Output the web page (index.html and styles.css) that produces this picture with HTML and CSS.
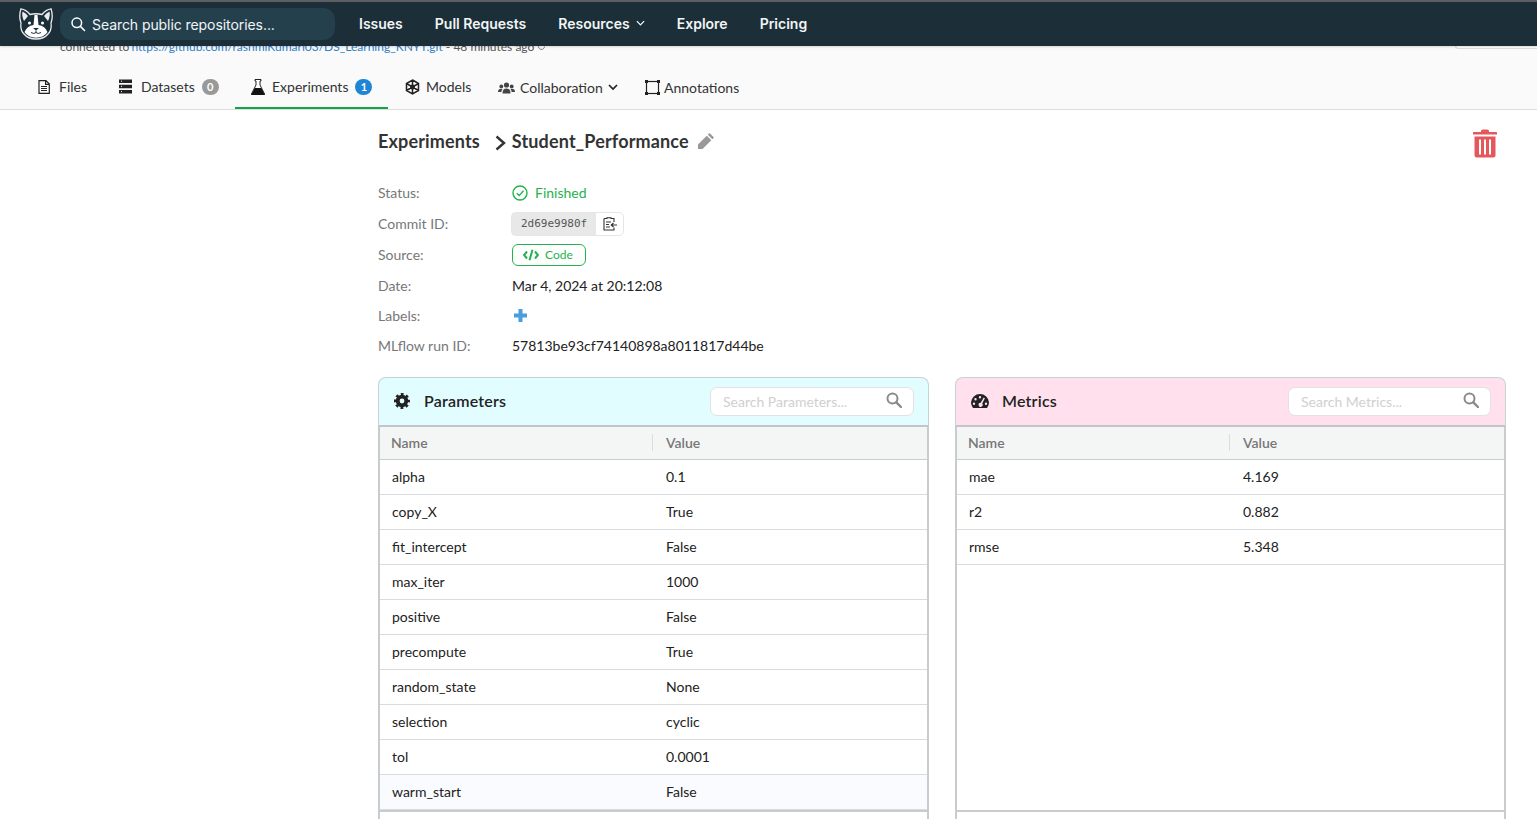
FILE: index.html
```html
<!DOCTYPE html>
<html lang="en">

<head>
  <meta charset="UTF-8">
  <meta name="viewport" content="width=device-width, initial-scale=1.0">
  <title>Student_Performance</title>
  <link rel="stylesheet" href="styles.css">
</head>

<body>
  <header class="navbar">
    <svg class="logo" viewBox="0 0 36 32" width="36" height="32">
      <path d="M3 .8 Q8 1.500 12 6.500 Q18 5 24 6.500 Q28 1.500 33 .8 Q35.500 8 33 15 Q34 22 30 26 Q26 31 18 31 Q10 31 6 26 Q2 22 3 15 Q.5 8 3 .8Z" fill="#1c2f38" stroke="#e8ecee" stroke-width="1.300"/>
      <path d="M4.500 3.500 Q8 5 10 8 L6 13 Q3.500 8 4.500 3.500Z M31.500 3.500 Q28 5 26 8 L30 13 Q32.500 8 31.500 3.500Z" fill="#e8ecee"/>
      <path d="M16.500 7 H19.500 L20.500 17 Q27 18 29.500 24 Q26 29.500 18 29.800 Q10 29.500 6.500 24 Q9 18 15.500 17Z" fill="#fff"/>
      <circle cx="11.500" cy="15" r="1.500" fill="#fff"/>
      <circle cx="24.500" cy="15" r="1.500" fill="#fff"/>
      <path d="M15 20 H21 L18 22.500Z" fill="#1c2f38"/>
      <path d="M18 22.500 V24.500 M13 24.500 Q16 26.500 18 24.500 Q20 26.500 23 24.500" fill="none" stroke="#1c2f38" stroke-width="1"/>
    </svg>
    <div class="nav-search">
      <svg viewBox="0 0 16 16" width="16" height="16"><circle cx="6.800" cy="6.800" r="4.800" fill="none" stroke="#fff" stroke-width="1.500"/><path d="M10.400 10.400 L14.500 14.500" stroke="#fff" stroke-width="1.600" stroke-linecap="round"/></svg>
      <span>Search public repositories...</span>
    </div>
    <nav class="nav-links">
      <a>Issues</a>
      <a>Pull Requests</a>
      <a>Resources <svg viewBox="0 0 10 6" width="9" height="6"><path d="M1 1 L5 5 L9 1" fill="none" stroke="#fff" stroke-width="1.300"/></svg></a>
      <a>Explore</a>
      <a>Pricing</a>
    </nav>
  </header>

  <div class="repo-head">
    <p class="repo-line">connected to <a>https://github.com/rashmiKumari03/DS_Learning_KNYT.git</a> - 48 minutes ago
      <svg viewBox="0 0 12 12" width="9" height="9"><path d="M10 6 A4 4 0 1 1 8.500 2.800 M8.500 .8 V3.200 H6" fill="none" stroke="#777" stroke-width="1.300"/></svg>
    </p>
    <span class="repo-corner"></span>
    <div class="tabs">
      <a class="tab tab-files">
        <svg viewBox="0 0 12 14" width="12" height="14"><path d="M1 .7 H8 L11.300 4 V13.300 H1Z M7.600 .8 V4.300 H11" fill="none" stroke="#222" stroke-width="1.200"/><path d="M3 6.500 H9 M3 8.500 H9 M3 10.500 H9" stroke="#222" stroke-width="1"/></svg>
        Files
      </a>
      <a class="tab tab-datasets">
        <svg viewBox="0 0 13 15" width="13" height="15"><path d="M0 .5 H13 V4 H0Z M0 5.700 H13 V9.200 H0Z M0 10.900 H13 V14.500 H0Z" fill="#222"/><path d="M2 2.200 H3 M2 7.400 H3 M2 12.600 H3" stroke="#fff"/></svg>
        Datasets <span class="badge badge-grey">0</span>
      </a>
      <a class="tab tab-experiments active">
        <svg viewBox="0 0 14 16" width="14" height="16"><path d="M4 .5 H10 V2 H9 V6 L13.800 15.500 H.2 L5 6 V2 H4Z" fill="#fff" stroke="#222" stroke-width="1"/><path d="M3.800 9 H10.200 L13.800 15.800 H.2Z" fill="#111"/></svg>
        Experiments <span class="badge badge-blue">1</span>
      </a>
      <a class="tab tab-models">
        <svg viewBox="0 0 15 16" width="15" height="16"><path d="M7.500 1 L13.500 4.500 V11.500 L7.500 15 L1.500 11.500 V4.500Z M7.500 1 V15 M1.500 4.500 L13.500 11.500 M13.500 4.500 L1.500 11.500" fill="none" stroke="#222" stroke-width="1.500"/><circle cx="7.500" cy="8" r="2.500" fill="#222"/></svg>
        Models
      </a>
      <a class="tab tab-collab">
        <svg viewBox="0 0 17 12" width="17" height="12"><circle cx="8.500" cy="3" r="2.600" fill="#444"/><circle cx="3.300" cy="4.400" r="1.900" fill="#444"/><circle cx="13.700" cy="4.400" r="1.900" fill="#444"/><path d="M4.500 11.500 Q4.500 6.500 8.500 6.500 Q12.500 6.500 12.500 11.500Z M0 10 Q0 6.800 3.300 6.800 L4.600 7 Q3.500 8 3.400 10Z M17 10 Q17 6.800 13.700 6.800 L12.400 7 Q13.500 8 13.600 10Z" fill="#444"/></svg>
        Collaboration
        <svg viewBox="0 0 10 7" width="10" height="7"><path d="M1 1 L5 5 L9 1" fill="none" stroke="#222" stroke-width="1.700"/></svg>
      </a>
      <a class="tab tab-annot">
        <svg viewBox="0 0 15 15" width="15" height="15"><rect x="1.500" y="1.500" width="12" height="12" fill="none" stroke="#222" stroke-width="1.200"/><path d="M0 0 H3 V3 H0Z M12 0 H15 V3 H12Z M0 12 H3 V15 H0Z M12 12 H15 V15 H12Z" fill="#222"/></svg>
        Annotations
      </a>
    </div>
  </div>

  <main class="content">
    <div class="title-row">
      <h2>Experiments</h2>
      <svg class="crumb" viewBox="0 0 11 16" width="11" height="16"><path d="M1.500 1.500 L9 8 L1.500 14.500" fill="none" stroke="#333" stroke-width="2.400"/></svg>
      <h2>Student_Performance</h2>
      <svg class="pencil" viewBox="0 0 18 18" width="18" height="18"><path d="M12.500 1 L17 5.500 L15.300 7.200 L10.800 2.700Z M9.800 3.700 L14.300 8.200 L5.500 17 H1 V12.500Z" fill="#999"/></svg>
      <svg class="trash" viewBox="0 0 24 29" width="24" height="29">
        <path d="M8 2 Q8 .4 10 .4 H14 Q16 .4 16 2 V3 H23.500 Q24 3 24 4 V5.500 H0 V4 Q0 3 .5 3 H8Z" fill="#e5575b"/>
        <path d="M1.500 7.500 H22.500 V26 Q22.500 28.500 20 28.500 H4 Q1.500 28.500 1.500 26Z" fill="#e5575b"/>
        <path d="M7 10.500 V25.500 M12 10.500 V25.500 M17 10.500 V25.500" stroke="#fff" stroke-width="2"/>
      </svg>
    </div>

    <dl class="meta">
      <dt>Status:</dt>
      <dd class="status">
        <svg viewBox="0 0 16 16" width="16" height="16"><circle cx="8" cy="8" r="7" fill="none" stroke="#22b34c" stroke-width="1.400"/><path d="M4.700 8.200 L7.200 10.600 L11.500 5.700" fill="none" stroke="#22b34c" stroke-width="1.400"/></svg>
        Finished
      </dd>
      <dt>Commit ID:</dt>
      <dd>
        <span class="commit"><code>2d69e9980f</code><span class="copy"><svg viewBox="0 0 14 15" width="14" height="15"><path d="M1 2.500 H4 V1.700 H8 V2.500 H11 V6 M11 11.500 V14 H1 V2.500" fill="none" stroke="#333" stroke-width="1.100"/><path d="M3 6 H8 M3 8.500 H6 M3 11 H7" stroke="#333"/><path d="M14 9 H8.500 M10.500 7 L8.300 9 L10.500 11" fill="none" stroke="#333" stroke-width="1.200"/></svg></span></span>
      </dd>
      <dt>Source:</dt>
      <dd>
        <span class="code-btn"><svg viewBox="0 0 16 12" width="16" height="12"><path d="M4 2.500 L1 6 L4 9.500 M12 2.500 L15 6 L12 9.500 M9.500 .8 L6.500 11.200" fill="none" stroke="#22b34c" stroke-width="2"/></svg>Code</span>
      </dd>
      <dt>Date:</dt>
      <dd>Mar 4, 2024 at 20:12:08</dd>
      <dt>Labels:</dt>
      <dd><svg class="plus" viewBox="0 0 13 13" width="13" height="13"><path d="M4.500 0 H8.500 V4.500 H13 V8.500 H8.500 V13 H4.500 V8.500 H0 V4.500 H4.500Z" fill="#4a9ede"/></svg></dd>
      <dt>MLflow run ID:</dt>
      <dd>57813be93cf74140898a8011817d44be</dd>
    </dl>

    <div class="panels">
      <section class="panel panel-params">
        <div class="panel-head">
          <svg viewBox="0 0 16 16" width="16" height="16"><circle cx="8" cy="8" r="4.300" fill="none" stroke="#222" stroke-width="3.800"/><circle cx="8" cy="8" r="6.800" fill="none" stroke="#222" stroke-width="2.400" stroke-dasharray="2.800 2.540" stroke-dashoffset="1.400"/></svg>
          <h3>Parameters</h3>
          <div class="panel-search">
            <span>Search Parameters...</span>
            <svg viewBox="0 0 16 16" width="16" height="16"><circle cx="6.500" cy="6.500" r="5" fill="none" stroke="#8a8a8a" stroke-width="2"/><path d="M10.300 10.300 L15 15" stroke="#8a8a8a" stroke-width="2.400" stroke-linecap="round"/></svg>
          </div>
        </div>
        <div class="t-head"><span>Name</span><span>Value</span></div>
        <div class="t-body">
          <div class="t-row"><span>alpha</span><span>0.1</span></div>
          <div class="t-row"><span>copy_X</span><span>True</span></div>
          <div class="t-row"><span>fit_intercept</span><span>False</span></div>
          <div class="t-row"><span>max_iter</span><span>1000</span></div>
          <div class="t-row"><span>positive</span><span>False</span></div>
          <div class="t-row"><span>precompute</span><span>True</span></div>
          <div class="t-row"><span>random_state</span><span>None</span></div>
          <div class="t-row"><span>selection</span><span>cyclic</span></div>
          <div class="t-row"><span>tol</span><span>0.0001</span></div>
          <div class="t-row hover"><span>warm_start</span><span>False</span></div>
        </div>
        <div class="t-foot"></div>
      </section>

      <section class="panel panel-metrics">
        <div class="panel-head">
          <svg viewBox="0 0 18 16" width="18" height="16"><path fill-rule="evenodd" d="M9 1 A9 9 0 0 1 18 9.500 Q18 12.500 16 15 H2 Q0 12.500 0 9.500 A9 9 0 0 1 9 1Z M9 3 A1.200 1.200 0 1 0 9 5.400 A1.200 1.200 0 1 0 9 3Z M4.500 5 A1.200 1.200 0 1 0 4.500 7.400 A1.200 1.200 0 1 0 4.500 5Z M3 9.500 A1.200 1.200 0 1 0 3 11.900 A1.200 1.200 0 1 0 3 9.500Z M15 9.500 A1.200 1.200 0 1 0 15 11.900 A1.200 1.200 0 1 0 15 9.500Z M12.700 4.500 L9.700 9.800 A2 2 0 1 0 11.200 10.600 L13.900 5.300Z" fill="#222"/></svg>
          <h3>Metrics</h3>
          <div class="panel-search">
            <span>Search Metrics...</span>
            <svg viewBox="0 0 16 16" width="16" height="16"><circle cx="6.500" cy="6.500" r="5" fill="none" stroke="#8a8a8a" stroke-width="2"/><path d="M10.300 10.300 L15 15" stroke="#8a8a8a" stroke-width="2.400" stroke-linecap="round"/></svg>
          </div>
        </div>
        <div class="t-head"><span>Name</span><span>Value</span></div>
        <div class="t-body">
          <div class="t-row"><span>mae</span><span>4.169</span></div>
          <div class="t-row"><span>r2</span><span>0.882</span></div>
          <div class="t-row"><span>rmse</span><span>5.348</span></div>
        </div>
        <div class="t-foot"></div>
      </section>
    </div>
  </main>
</body>

</html>
```

FILE: styles.css
```css
* {
  box-sizing: border-box;
}

html,
body {
  height: 100%;
}

body {
  margin: 0;
  overflow: hidden;
  background: #fff;
  color: #222;
  font-family: Lato, "Noto Sans", sans-serif;
  font-size: 14px;
}

svg {
  display: block;
  flex: none;
}

/* top bar */
.navbar {
  position: relative;
  z-index: 2;
  display: flex;
  align-items: center;
  height: 46px;
  padding-left: 18px;
  background: #1c2f38;
  border-top: 2px solid #5b5f61;
  box-shadow: 0 1px 2px rgba(0, 0, 0, .15);
}

.nav-search {
  display: flex;
  align-items: center;
  gap: 6px;
  width: 275px;
  height: 32px;
  margin-left: 6px;
  padding-left: 10px;
  border-radius: 12px;
  background: #24404d;
  color: #f2f5f6;
  font-family: Inter, sans-serif;
  font-size: 14px;
  letter-spacing: -.07px;
}

.nav-links {
  display: flex;
  align-items: center;
  gap: 32px;
  margin: 0 0 2px 24px;
  color: #f2f5f6;
  font-family: Inter, sans-serif;
  font-size: 14px;
  font-weight: 600;
}

.nav-links a {
  display: flex;
  align-items: center;
  gap: 6px;
}

/* repo header, its first line sits under the top bar */
.repo-head {
  display: flow-root;
  position: relative;
  height: 64px;
  background: #fafafa;
  border-bottom: 1px solid #dcdcdc;
}

.repo-line {
  height: 14px;
  margin: -6px 0 0;
  padding-left: 60px;
  color: #555;
  font-size: 12px;
  line-height: 14px;
  white-space: nowrap;
}

.repo-line a {
  margin-left: -1px;
  color: #2f80c8;
}

.repo-line svg {
  display: inline;
}

.repo-corner {
  position: absolute;
  top: 0;
  right: 0;
  width: 82px;
  height: 3px;
  border-bottom: 1px solid #ddd;
  border-left: 1px solid #ddd;
  border-bottom-left-radius: 4px;
  background: #fff;
}

.tabs {
  display: flex;
  height: 54px;
  margin-top: 1px;
  font-size: 14px;
  color: #333;
}

.tab {
  display: flex;
  align-items: center;
  gap: 7px;
  height: 54px;
  padding-top: 11px;
  border-bottom: 2px solid transparent;
}

.tab.active {
  border-bottom-color: #16a34a;
}

.tab-files {
  gap: 9px;
  width: 81px;
  margin-left: 38px;
}

.tab-datasets {
  gap: 9px;
  width: 116px;
}

.tab-experiments {
  width: 153px;
  padding-left: 16px;
}

.tab-models {
  gap: 6px;
  width: 93px;
  margin-left: 17px;
}

.tab-collab {
  gap: 5px;
  width: 147px;
  padding-top: 13px;
}

.tab-annot {
  gap: 4px;
  padding-top: 13px;
}

.badge {
  display: inline-flex;
  align-items: center;
  justify-content: center;
  width: 17px;
  height: 16px;
  border-radius: 8px;
  color: #fff;
  font-size: 11px;
  font-weight: 700;
}

.badge-grey {
  margin-left: -2px;
  background: #999;
}

.badge-blue {
  background: #1f86d6;
}

/* page body */
.content {
  padding: 0 31px 0 378px;
}

.title-row {
  display: flex;
  align-items: center;
  height: 47px;
  margin-top: 8px;
  color: #333;
}

.title-row h2 {
  margin: 0 0 1px;
  font-size: 18px;
  font-weight: 700;
  letter-spacing: .15px;
}

.crumb {
  margin: 2px 6px 0 15px;
}

.pencil {
  margin: 0 0 2px 8px;
}

.trash {
  margin: 3px 9px 0 auto;
}

.meta {
  display: grid;
  grid-template-columns: 134px 1fr;
  grid-template-rows: 31px 31px 31px 30px 30px 30px;
  align-items: center;
  margin: 12px 0 0;
}

.meta dt {
  color: #777;
}

.meta dd {
  margin: 0;
}

.status {
  display: flex;
  align-items: center;
  gap: 7px;
  color: #22b34c;
}

.plus {
  margin-left: 2px;
}

.commit {
  display: inline-flex;
  align-items: center;
  height: 24px;
  margin-left: -1px;
  border: 1px solid #e6e6e6;
  border-radius: 5px;
}

.commit code {
  display: block;
  padding: 0 9px;
  background: #e8e8e8;
  color: #555;
  font-family: "DejaVu Sans Mono", monospace;
  font-size: 11px;
  line-height: 22px;
}

.copy {
  display: flex;
  justify-content: center;
  width: 27px;
}

.code-btn {
  display: inline-flex;
  align-items: center;
  gap: 6px;
  width: 74px;
  height: 22px;
  padding-left: 10px;
  border: 1px solid #22b34c;
  border-radius: 6px;
  color: #22b34c;
  font-size: 12px;
}

.panels {
  display: grid;
  grid-template-columns: 1fr 1fr;
  gap: 26px;
  margin-top: 16.6px;
}

.panel-head {
  display: flex;
  align-items: center;
  height: 50px;
  padding: 0 14px 0 15px;
  border: 1px solid #c5d3d6;
  border-bottom: 2px solid #c2c6c8;
  border-radius: 8px 8px 0 0;
}

.panel-params .panel-head {
  background: #e2fdff;
}

.panel-metrics .panel-head {
  background: #ffe0ec;
}

.panel-head h3 {
  margin: 0 0 2px 14px;
  font-size: 16px;
  font-weight: 600;
  letter-spacing: .2px;
  color: #222;
}

.panel-metrics h3 {
  margin-left: 13px;
}

.panel-search {
  display: flex;
  align-items: center;
  justify-content: space-between;
  width: 204px;
  height: 29px;
  margin-left: auto;
  padding: 0 11px 0 12px;
  border: 1px solid #e2e2e2;
  border-radius: 7px;
  background: #fff;
  color: #d0d0d0;
}

.panel-search svg {
  margin-bottom: 2px;
}

.panel-metrics .panel-search {
  width: 203px;
}

.t-head,
.t-row {
  display: grid;
  grid-template-columns: 272px 1fr;
}

.t-head {
  height: 33px;
  align-items: center;
  background: #f4f6f6;
  border: solid #c8ccce;
  border-width: 0 2px 1px;
  color: #777;
  font-weight: 600;
  font-size: 14px;
}

.t-head span {
  padding-left: 11px;
}

.t-head span + span {
  height: 17px;
  padding-left: 13px;
  border-left: 1px solid #dcdcdc;
  line-height: 17px;
}

.t-body {
  height: 350px;
  border: solid #c8ccce;
  border-width: 0 2px;
}

.t-row {
  height: 35px;
  align-items: center;
  border-bottom: 1px solid #d8dcdf;
}

.t-row span {
  padding-left: 12px;
}

.t-row span + span {
  padding-left: 14px;
}

.t-row.hover {
  background: #fafbff;
}

.t-foot {
  height: 12px;
  border: solid #c8ccce;
  border-width: 2px 2px 0;
}
```
